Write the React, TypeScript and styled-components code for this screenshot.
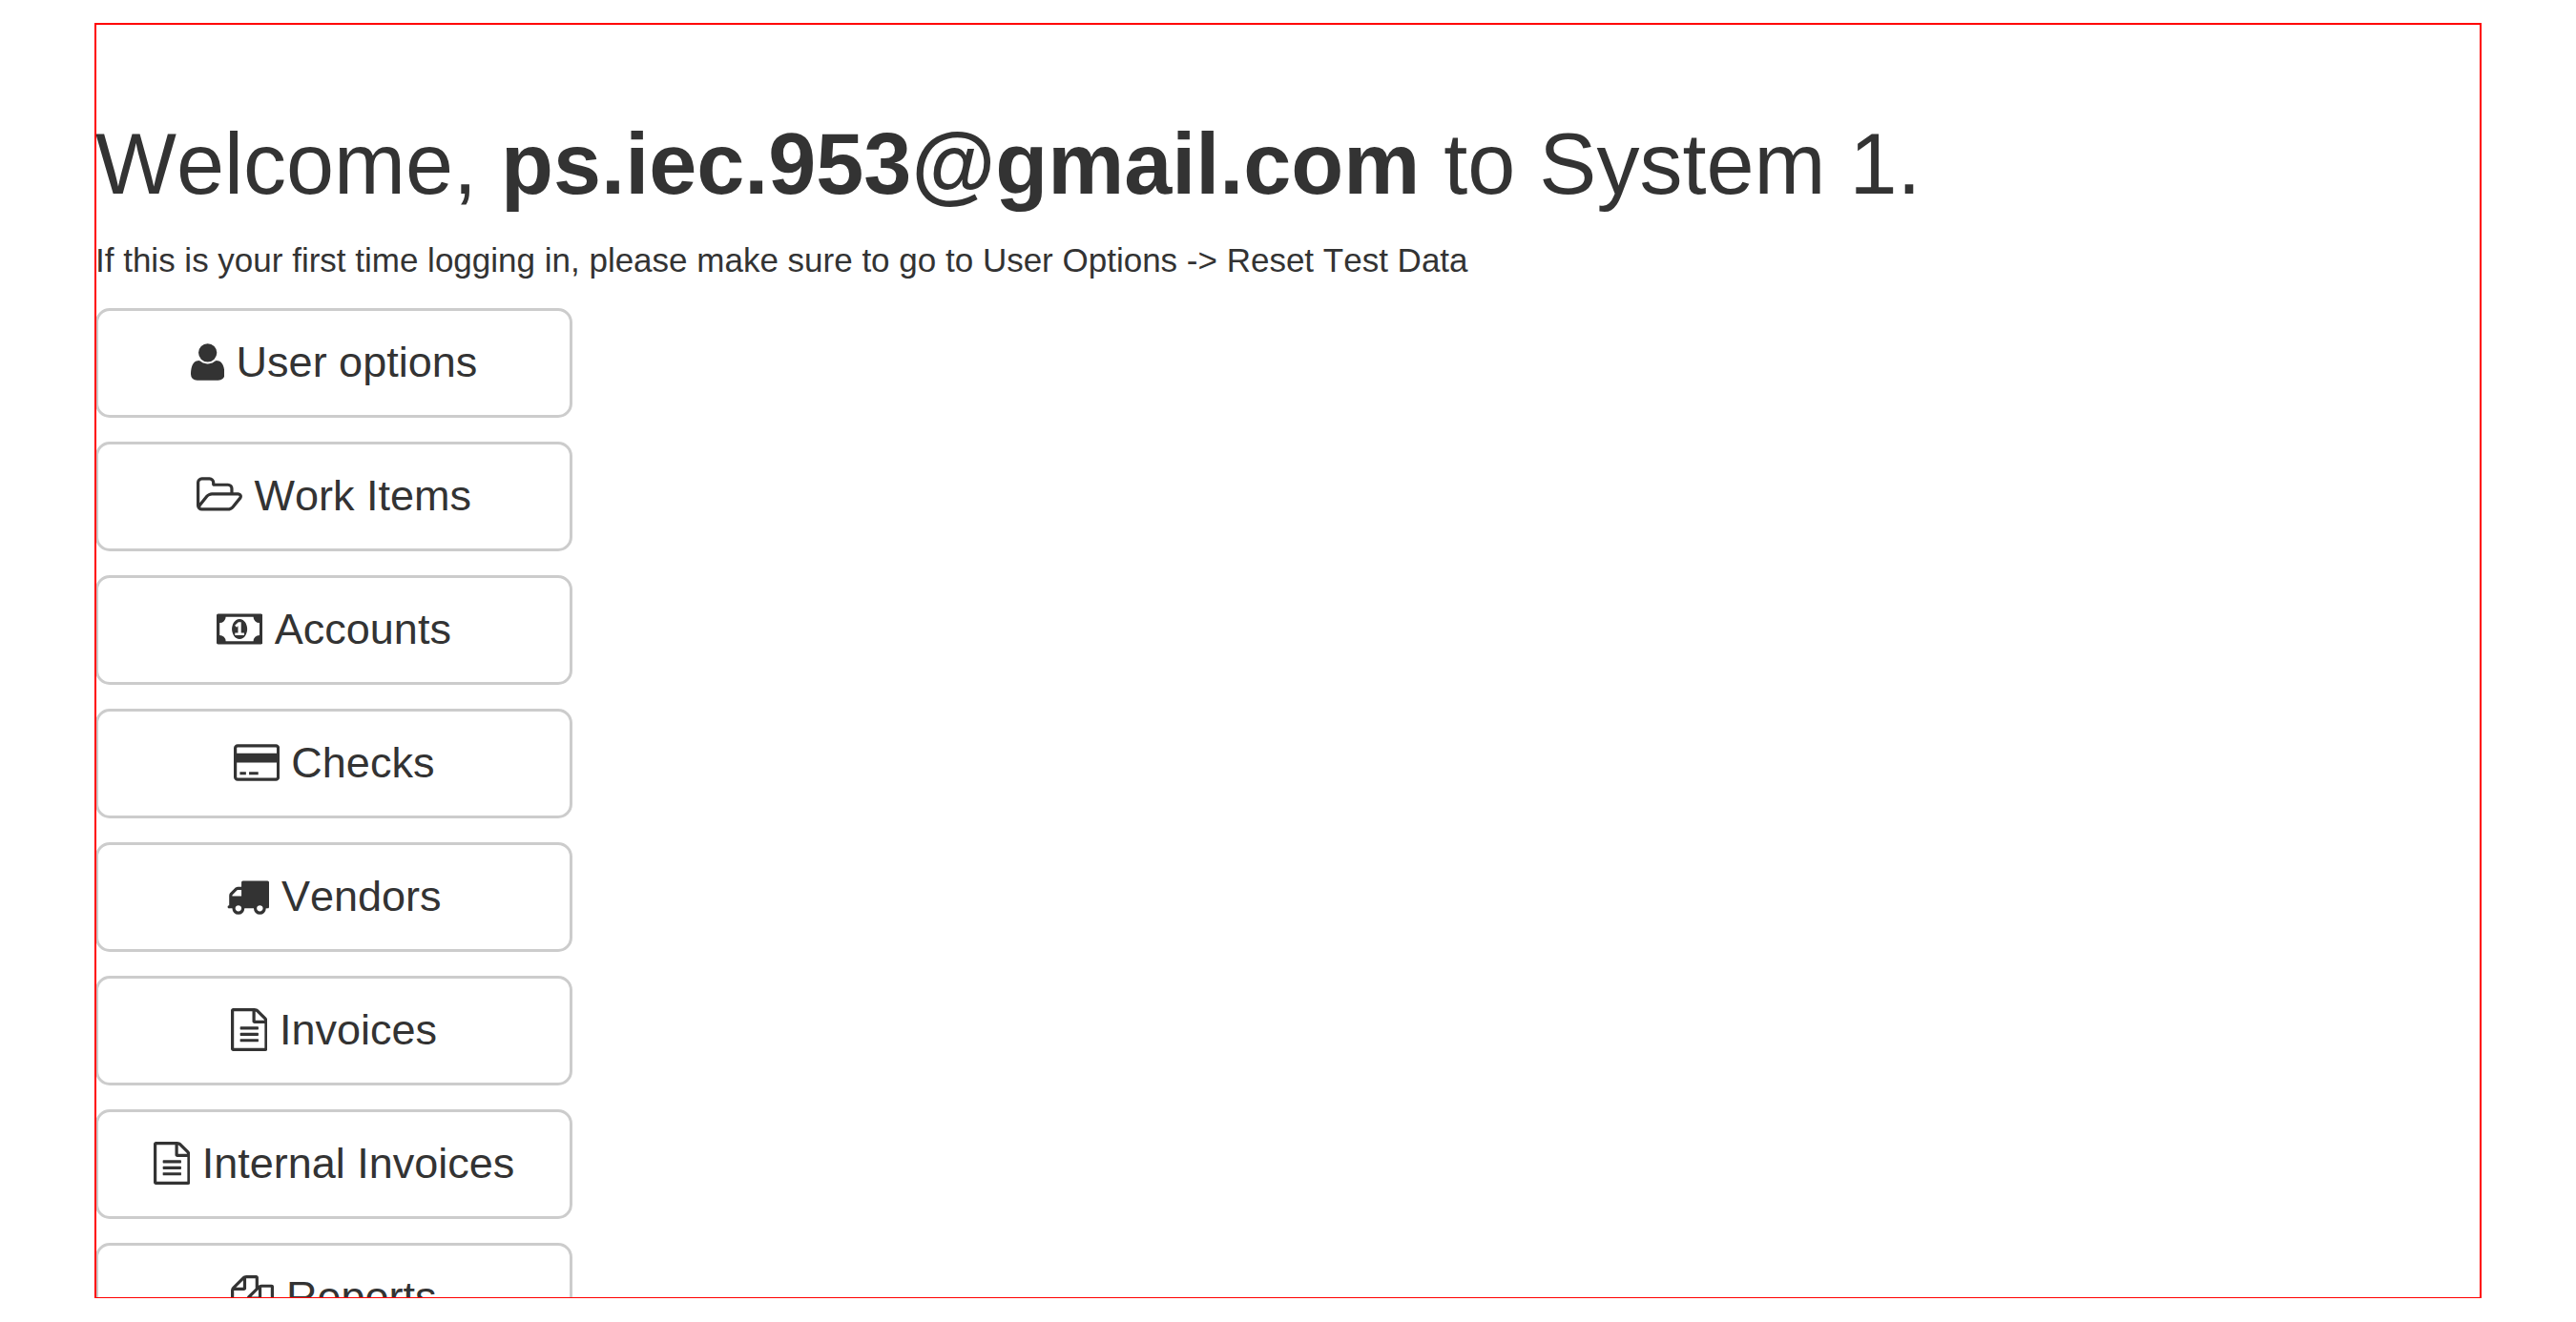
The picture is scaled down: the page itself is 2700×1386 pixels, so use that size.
import React from "react";
import styled, { createGlobalStyle } from "styled-components";

const GlobalStyle = createGlobalStyle`
  *, *::before, *::after {
    box-sizing: border-box;
  }

  body {
    margin: 0;
    background: #fff;
    color: #333;
    font-family: "Liberation Sans", Arial, Helvetica, sans-serif;
    font-size: 35px;
    font-kerning: none;
    line-height: 50px;
  }
`;

const Page = styled.div`
  display: flex;
  flex-direction: column;
  height: 100vh;
  padding: 24px 99px 25px;
`;

const Frame = styled.main`
  flex: 1;
  min-height: 0;
  overflow-x: hidden;
  overflow-y: auto;
  scrollbar-width: none;
  border: 2px solid #f00;
  border-bottom-width: 1px;
`;

const Content = styled.div`
  margin: 0 -1px;
  padding-top: 97px;
`;

const Title = styled.h1`
  margin: 0 0 26px;
  font-size: 90px;
  font-weight: 500;
  line-height: 99px;
`;

const Hint = styled.p`
  margin: 0 0 25px;
`;

const Menu = styled.nav`
  display: flex;
  flex-direction: column;
  align-items: flex-start;
  gap: 25px;
`;

const MenuButton = styled.button`
  width: 500px;
  max-width: 100%;
  padding: 23px 40px 25px;
  border: 3px solid #ccc;
  border-radius: 15px;
  background: #fff;
  color: inherit;
  font-family: inherit;
  font-size: 45px;
  font-kerning: inherit;
  line-height: 61px;
  white-space: nowrap;
  cursor: pointer;

  &:hover {
    border-color: #adadad;
    background: #e6e6e6;
  }
`;

const Glyph = styled.svg`
  height: 45px;
  vertical-align: -7px;
  fill: currentColor;
`;

interface IconShape {
  width: number;
  d: string;
}

const fileText: IconShape = {
  width: 1536,
  d: "M1468 1156q28 -28 48 -76t20 -88v-1152q0 -40 -28 -68t-68 -28h-1344q-40 0 -68 28t-28 68v1600q0 40 28 68t68 28h896q40 0 88 -20t76 -48zM1024 1400v-376h376q-10 29 -22 41l-313 313q-12 12 -41 22zM1408 -128v1024h-416q-40 0 -68 28t-28 68v416h-768v-1536h1280zM384 736q0 14 9 23t23 9h704q14 0 23 -9t9 -23v-64q0 -14 -9 -23t-23 -9h-704q-14 0 -23 9t-9 23v64zM1120 512q14 0 23 -9t9 -23v-64q0 -14 -9 -23t-23 -9h-704q-14 0 -23 9t-9 23v64q0 14 9 23t23 9h704zM1120 256q14 0 23 -9t9 -23v-64q0 -14 -9 -23t-23 -9h-704q-14 0 -23 9t-9 23v64q0 14 9 23t23 9h704z",
};

const user: IconShape = {
  width: 1408,
  d: "M1408 131q0 -120 -73 -189.5t-194 -69.5h-874q-121 0 -194 69.5t-73 189.5q0 53 3.5 103.5t14 109t26.5 108.5t43 97.5t62 81t85.5 53.5t111.5 20q9 0 42 -21.5t74.5 -48t108 -48t133.5 -21.5t133.5 21.5t108 48t74.5 48t42 21.5q61 0 111.5 -20t85.5 -53.5t62 -81t43 -97.5t26.5 -108.5t14 -109t3.5 -103.5zM1088 1024q0 -159 -112.5 -271.5t-271.5 -112.5t-271.5 112.5t-112.5 271.5t112.5 271.5t271.5 112.5t271.5 -112.5t112.5 -271.5z",
};

const folderOpen: IconShape = {
  width: 1920,
  d: "M1781 605q0 35 -53 35h-1088q-40 0 -85.5 -21.5t-71.5 -52.5l-294 -363q-18 -24 -18 -40q0 -35 53 -35h1088q40 0 86 22t71 53l294 363q18 22 18 39zM640 768h768v160q0 40 -28 68t-68 28h-576q-40 0 -68 28t-28 68v64q0 40 -28 68t-68 28h-320q-40 0 -68 -28t-28 -68v-853l256 315q44 53 116 87.5t140 34.5zM1909 605q0 -62 -46 -120l-295 -363q-43 -53 -116 -87.5t-140 -34.5h-1088q-92 0 -158 66t-66 158v960q0 92 66 158t158 66h320q92 0 158 -66t66 -158v-32h544q92 0 158 -66t66 -158v-160h192q54 0 99 -24.5t67 -70.5q15 -32 15 -68z",
};

const money: IconShape = {
  width: 1920,
  d: "M768 384h384v96h-128v448h-114l-148 -137l77 -80q42 37 55 57h2v-288h-128v-96zM1280 640q0 -70 -21 -142t-59.5 -134t-101.5 -101t-138 -39t-138 39t-101.5 101t-59.5 134t-21 142t21 142t59.5 134t101.5 101t138 39t138 -39t101.5 -101t59.5 -134t21 -142zM1792 384v512q-106 0 -181 75t-75 181h-1152q0 -106 -75 -181t-181 -75v-512q106 0 181 -75t75 -181h1152q0 106 75 181t181 75zM1920 1216v-1152q0 -26 -19 -45t-45 -19h-1792q-26 0 -45 19t-19 45v1152q0 26 19 45t45 19h1792q26 0 45 -19t19 -45z",
};

const creditCard: IconShape = {
  width: 1920,
  d: "M1760 1408q66 0 113 -47t47 -113v-1216q0 -66 -47 -113t-113 -47h-1600q-66 0 -113 47t-47 113v1216q0 66 47 113t113 47h1600zM160 1280q-13 0 -22.5 -9.5t-9.5 -22.5v-224h1664v224q0 13 -9.5 22.5t-22.5 9.5h-1600zM1760 0q13 0 22.5 9.5t9.5 22.5v608h-1664v-608q0 -13 9.5 -22.5t22.5 -9.5h1600zM256 128v128h256v-128h-256zM640 128v128h384v-128h-384z",
};

const truck: IconShape = {
  width: 1792,
  d: "M640 128q0 52 -38 90t-90 38t-90 -38t-38 -90t38 -90t90 -38t90 38t38 90zM256 640h384v256h-158q-13 0 -22 -9l-195 -195q-9 -9 -9 -22v-30zM1536 128q0 52 -38 90t-90 38t-90 -38t-38 -90t38 -90t90 -38t90 38t38 90zM1792 1216v-1024q0 -15 -4 -26.5t-13.5 -18.5t-16.5 -11.5t-23.5 -6t-22.5 -2t-25.5 0t-22.5 0.5q0 -106 -75 -181t-181 -75t-181 75t-75 181h-384q0 -106 -75 -181t-181 -75t-181 75t-75 181h-64q-3 0 -22.5 -0.5t-25.5 0t-22.5 2t-23.5 6t-16.5 11.5t-13.5 18.5t-4 26.5q0 26 19 45t45 19v320q0 8 -0.5 35t0 38t2.5 34.5t6.5 37t14 30.5t22.5 30l198 198q19 19 50.5 32t58.5 13h160v192q0 26 19 45t45 19h1024q26 0 45 -19t19 -45z",
};

const files: IconShape = {
  width: 1792,
  d: "M1696 1152q40 0 68 -28t28 -68v-1216q0 -40 -28 -68t-68 -28h-960q-40 0 -68 28t-28 68v288h-544q-40 0 -68 28t-28 68v672q0 40 20 88t48 76l408 408q28 28 76 48t88 20h416q40 0 68 -28t28 -68v-328q68 40 128 40h416zM1152 939l-299 -299h299v299zM512 1323l-299 -299h299v299zM708 676l316 316v416h-384v-416q0 -40 -28 -68t-68 -28h-416v-640h512v256q0 40 20 88t48 76zM1664 -128v1152h-384v-416q0 -40 -28 -68t-68 -28h-416v-640h896z",
};

const menuItems: { label: string; icon: IconShape }[] = [
  { label: "User options", icon: user },
  { label: "Work Items", icon: folderOpen },
  { label: "Accounts", icon: money },
  { label: "Checks", icon: creditCard },
  { label: "Vendors", icon: truck },
  { label: "Invoices", icon: fileText },
  { label: "Internal Invoices", icon: fileText },
  { label: "Reports", icon: files },
];

// Icon outlines use a y-up grid of 1792 units with the baseline at 0.
function Icon({ shape }: { shape: IconShape }) {
  return (
    <Glyph viewBox={`0 -1536 ${shape.width} 1792`} aria-hidden="true">
      <path transform="scale(1 -1)" fillRule="evenodd" d={shape.d} />
    </Glyph>
  );
}

export default function App() {
  return (
    <>
      <GlobalStyle />
      <Page>
        <Frame>
          <Content>
            <Title>
              Welcome, <strong>ps.iec.953@gmail.com</strong> to System 1.
            </Title>
            <Hint>
              If this is your first time logging in, please make sure to go to User Options -&gt; Reset Test Data
            </Hint>
            <Menu aria-label="Main menu">
              {menuItems.map(({ label, icon }) => (
                <MenuButton key={label} type="button">
                  <Icon shape={icon} /> {label}
                </MenuButton>
              ))}
            </Menu>
          </Content>
        </Frame>
      </Page>
    </>
  );
}
